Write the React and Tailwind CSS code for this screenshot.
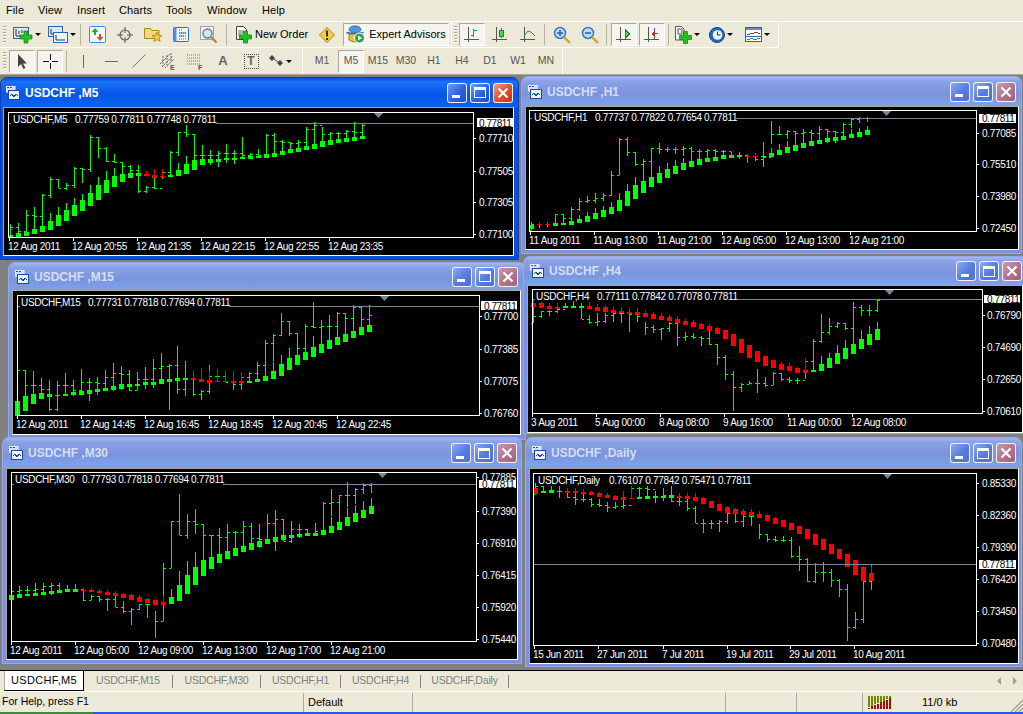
import React from 'react';

const FONT = '"Liberation Sans", Arial, sans-serif';

// bars are read off the reference at 3x, so every y below is in 3x units from the chart's origin
const chunk = (a, n) => {
  const out = [];
  for (let i = 0; i < a.length; i += n) out.push(a.slice(i, i + n));
  return out;
};

const inRanges = (i, ranges) => ranges.some(([a, b]) => i >= a && i <= b);

const CHARTS = {
  m5: {
    ox: 0, oy: 100, bx: 4, by: 108, w: 509, h: 147, plot: [25, 35, 1420, 411], start: 30, priceY: 70,
    head: ['USDCHF,M5', 38, '0.77759 0.77811 0.77748 0.77811', 225], lineFrom: 648, tri: 1135,
    box: [1430, 55, 1540, 81], axisX: 1437,
    yl: [['0.77710', 115], ['0.77505', 212], ['0.77305', 307], ['0.77100', 403]],
    xl: [[25, '12 Aug 2011'], [217, '12 Aug 20:55'], [409, '12 Aug 21:35'], [601, '12 Aug 22:15'], [793, '12 Aug 22:55'], [985, '12 Aug 23:35']],
    red: [[17, 19]],
    thin: [372,411,380, 370,400,392, 330,395,345, 322,390,348, 283,378,285, 230,293,238, 237,265,265, 250,270,256, 200,263,205, 205,250,208, 105,217,112, 110,173,143, 142,185,184, 162,188,187, 185,220,197, 195,218,210, 195,280,272, 258,280,262, 215,268,265, 208,236,215, 153,228,155, 97,168,97, 75,110,103, 102,172,165, 135,190,165, 150,195,165, 152,202,160, 132,190,158, 150,192,160, 112,178,165, 158,178,162, 147,172,165, 102,165,105, 100,160,122, 120,160,125, 127,155,130, 120,150,125, 82,145,88, 67,130,75, 80,125,103, 97,122,100, 97,118,100, 90,125,92, 67,115,95, 70,110,75],
    body: [405,405,411, 399,399,411, 396,396,408, 375,387,402, 365,378,395, 340,364,390, 322,345,378, 310,330,363, 295,316,348, 283,300,333, 255,280,318, 232,255,300, 213,240,279, 205,228,261, 198,222,246, 195,219,234, 200,219,228, 213,222,228, 208,225,234, 208,228,232, 210,225,231, 190,210,228, 168,192,222, 155,180,210, 158,177,195, 150,177,189, 152,177,186, 132,174,180, 150,174,180, 112,171,177, 158,168,177, 147,168,174, 150,163,174, 150,159,171, 140,153,165, 135,147,159, 130,144,156, 125,138,150, 120,132,147, 110,123,141, 105,120,135, 100,117,129, 100,114,126, 95,111,123, 90,108,117],
  },
  h1: {
    ox: 520, oy: 76, bx: 526, by: 107, w: 492, h: 142, plot: [28, 103, 1368, 465], start: 32, priceY: 127,
    head: ['USDCHF,H1', 42, '0.77737 0.77822 0.77654 0.77811', 225], lineFrom: 648, tri: 1097,
    box: [1378, 113, 1488, 140], axisX: 1386,
    yl: [['0.77085', 170], ['0.75510', 265], ['0.73980', 361], ['0.72450', 457]],
    xl: [[28, '11 Aug 2011'], [220, '11 Aug 13:00'], [412, '11 Aug 21:00'], [604, '12 Aug 05:00'], [796, '12 Aug 13:00'], [988, '12 Aug 21:00']],
    red: [[1, 2], [27, 28]],
    thin: [437,462,445, 437,455,445, 437,452,445, 413,445,414, 413,445,425, 392,440,398, 367,405,375, 360,382,372, 352,382,365, 350,375,358, 285,360,298, 187,298,190, 184,240,228, 228,270,265, 250,315,255, 215,295,217, 202,235,218, 213,228,218, 213,235,220, 210,240,216, 213,240,225, 218,240,224, 218,235,222, 220,240,224, 222,245,226, 228,245,236, 228,248,238, 235,262,240, 232,255,248, 198,272,242, 135,205,175, 150,178,175, 162,190,165, 165,215,170, 158,205,168, 163,205,170, 150,200,160, 158,200,165, 165,200,168, 142,180,145, 128,155,130, 124,142,126, 124,138,126],
    body: [440,448,460, 438,444,447, 440,444,447, 430,442,449, 430,441,446, 425,435,447, 418,429,440, 408,421,437, 397,411,429, 390,402,423, 378,393,414, 350,372,405, 325,345,390, 303,327,369, 282,315,351, 283,303,333, 270,291,321, 260,279,306, 252,270,294, 247,261,282, 240,255,273, 237,249,267, 232,245,258, 225,243,255, 225,238,249, 228,236,246, 228,238,243, 235,240,243, 230,240,243, 238,240,243, 215,231,243, 205,222,237, 195,213,231, 190,207,225, 185,201,216, 183,195,210, 178,191,204, 170,186,198, 165,183,195, 165,180,192, 160,174,186, 155,168,183, 150,162,177],
  },
  h4: {
    ox: 520, oy: 250, bx: 528, by: 286, w: 494, h: 146, plot: [35, 118, 1385, 490], start: 38, priceY: 148,
    head: ['USDCHF,H4', 48, '0.77111 0.77842 0.77078 0.77811', 230], lineFrom: 654, tri: 1108,
    box: [1392, 134, 1500, 160], axisX: 1401,
    yl: [['0.76790', 195], ['0.74690', 290], ['0.72650', 386], ['0.70610', 482]],
    xl: [[32, '3 Aug 2011'], [224, '5 Aug 00:00'], [416, '8 Aug 08:00'], [608, '9 Aug 16:00'], [800, '11 Aug 00:00'], [992, '12 Aug 08:00']],
    red: [[0, 3], [7, 34]],
    thin: [148,218,198, 182,205,184, 180,198,183, 172,188,178, 158,175,172, 152,175,170, 165,208,208, 195,222,215, 188,228,212, 190,218,195, 180,215,190, 180,218,190, 190,247,192, 190,217,198, 215,255,232, 225,248,237, 235,270,235, 215,245,218, 215,288,260, 245,272,258, 250,268,262, 258,288,265, 240,285,282, 282,345,322, 315,390,372, 362,483,412, 398,425,402, 393,403,398, 358,430,400, 380,412,405, 367,405,370, 370,393,387, 380,398,390, 385,402,390, 328,388,333, 268,365,272, 192,280,245, 205,255,228, 215,235,220, 220,240,235, 155,285,170, 165,198,180, 165,198,180, 148,185,150],
    body: [148,160,172, 155,160,174, 158,167,178, 160,171,177, 158,168,173, 155,168,173, 158,168,173, 155,168,178, 163,171,183, 165,172,186, 170,180,190, 172,183,190, 173,186,192, 173,186,195, 180,189,201, 185,192,207, 190,198,210, 195,201,213, 197,207,219, 208,213,225, 210,216,231, 218,222,237, 222,228,243, 230,234,252, 240,240,267, 252,252,288, 268,268,309, 285,285,324, 303,303,336, 318,318,348, 330,330,354, 336,342,360, 340,348,363, 350,354,369, 325,360,369, 340,360,366, 318,342,363, 310,324,354, 285,309,342, 270,294,327, 255,282,312, 240,267,297, 228,252,285, 217,237,270],
  },
  m15: {
    ox: 0, oy: 258, bx: 13, by: 291, w: 507, h: 143, plot: [50, 112, 1436, 472], start: 52, priceY: 145,
    head: ['USDCHF,M15', 62, '0.77731 0.77818 0.77694 0.77811', 263], lineFrom: 688, tri: 1153,
    box: [1444, 130, 1552, 156], axisX: 1451,
    yl: [['0.77700', 175], ['0.77385', 272], ['0.77075', 368], ['0.76760', 464]],
    xl: [[49, '12 Aug 2011'], [241, '12 Aug 14:45'], [433, '12 Aug 16:45'], [625, '12 Aug 18:45'], [817, '12 Aug 20:45'], [1009, '12 Aug 22:45']],
    red: [[22, 28]],
    thin: [262,470,335, 335,415,382, 340,400,382, 360,415,392, 365,458,452, 370,460,382, 345,415,382, 365,415,395, 333,410,372, 360,428,372, 357,410,375, 337,390,357, 315,398,345, 323,395,348, 335,398,396, 343,397,362, 327,392,362, 303,390,330, 285,370,325, 318,455,322, 263,408,393, 308,415,362, 335,415,408, 395,425,400, 322,408,355, 333,372,355, 335,372,372, 338,395,378, 343,395,358, 343,375,345, 312,360,322, 247,355,255, 228,310,232, 165,235,190, 190,235,225, 225,285,270, 198,270,205, 132,210,208, 185,250,203, 172,245,205, 163,240,165, 165,205,180, 142,205,148, 148,207,182, 142,200,170],
    body: [430,430,470, 414,414,458, 340,408,438, 360,405,423, 365,408,417, 370,410,414, 345,407,414, 365,403,412, 333,399,411, 360,396,408, 357,393,402, 337,390,399, 315,384,396, 323,378,393, 335,378,387, 343,378,385, 327,372,381, 303,372,381, 285,363,378, 318,363,372, 263,360,369, 308,360,366, 335,360,365, 330,363,372, 335,366,375, 333,369,372, 335,369,372, 338,369,375, 343,369,375, 345,369,375, 312,363,372, 325,354,369, 312,339,363, 290,318,354, 270,300,336, 250,291,321, 250,282,306, 235,267,297, 245,258,285, 225,246,273, 215,237,261, 205,228,252, 195,219,240, 180,207,231, 175,201,222],
  },
  m30: {
    ox: 0, oy: 436, bx: 7, by: 469, w: 510, h: 190, plot: [32, 109, 1428, 615], start: 34, priceY: 145,
    head: ['USDCHF,M30', 44, '0.77793 0.77818 0.77694 0.77811', 245], lineFrom: 670, tri: 1145,
    box: [1437, 131, 1548, 157], axisX: 1446,
    yl: [['0.77885', 123], ['0.77390', 225], ['0.76910', 320], ['0.76415', 416], ['0.75920', 512], ['0.75440', 608]],
    xl: [[31, '12 Aug 2011'], [223, '12 Aug 05:00'], [415, '12 Aug 09:00'], [607, '12 Aug 13:00'], [799, '12 Aug 17:00'], [991, '12 Aug 21:00']],
    red: [[9, 19]],
    thin: [427,490,465, 450,475,462, 450,478,462, 442,478,458, 442,475,450, 442,478,448, 442,470,462, 448,468,458, 445,468,458, 462,495,492, 478,493,480, 480,497,490, 487,525,490, 480,512,512, 495,530,525, 517,567,518, 505,522,505, 505,545,505, 525,605,555, 380,555,395, 255,397,255, 175,298,298, 235,310,255, 220,295,265, 265,345,298, 298,362,298, 275,348,302, 265,345,288, 285,345,288, 255,345,270, 260,342,305, 265,335,310, 235,320,262, 223,345,248, 250,315,315, 255,322,278, 265,305,280, 280,298,290, 260,295,285, 197,285,200, 160,240,197, 178,270,178, 138,212,178, 155,205,160, 142,175,148, 142,170,145],
    body: [455,477,492, 465,474,486, 465,474,480, 460,471,481, 455,468,478, 450,465,474, 455,462,472, 450,460,468, 450,460,468, 455,462,466, 455,462,468, 460,465,471, 462,468,477, 465,471,480, 470,474,486, 475,477,492, 478,483,498, 485,489,501, 490,492,507, 478,498,508, 460,483,504, 405,447,495, 375,417,474, 347,393,447, 333,372,420, 340,363,399, 330,354,381, 330,345,369, 320,336,360, 320,330,348, 320,321,342, 310,315,333, 305,309,324, 290,303,318, 290,297,312, 290,297,306, 290,293,303, 285,291,300, 280,291,299, 270,282,297, 243,270,291, 240,258,282, 215,243,270, 208,231,258, 195,222,246, 187,210,234],
  },
  daily: {
    ox: 520, oy: 436, bx: 530, by: 469, w: 488, h: 194, plot: [40, 110, 1368, 628], start: 44, priceY: 385,
    head: ['USDCHF,Daily', 54, '0.76107 0.77842 0.75471 0.77811', 267], lineFrom: 40, tri: 1100,
    box: [1378, 372, 1488, 398], axisX: 1386,
    yl: [['0.85330', 140], ['0.82360', 236], ['0.79390', 332], ['0.76420', 428], ['0.73450', 524], ['0.70480', 620]],
    xl: [[40, '15 Jun 2011'], [230, '27 Jun 2011'], [427, '7 Jul 2011'], [617, '19 Jul 2011'], [808, '29 Jul 2011'], [1000, '10 Aug 2011']],
    red: [[0, 0], [4, 12], [18, 42]],
    thin: [140,173,150, 150,170,168, 150,170,165, 150,185,165, 155,185,183, 165,207,190, 170,197,190, 185,212,205, 190,212,208, 198,228,212, 197,220,210, 165,218,207, 150,185,155, 155,190,157, 150,190,160, 165,200,180, 155,195,178, 150,198,195, 185,210,195, 190,225,215, 210,260,260, 250,290,262, 253,278,262, 253,287,255, 215,265,232, 235,260,255, 235,272,240, 240,270,240, 265,308,295, 293,317,310, 300,318,312, 300,318,312, 303,365,360, 330,405,368, 365,437,435, 380,440,408, 378,437,408, 400,453,432, 428,483,460, 445,615,572, 528,578,550, 435,560,435, 385,462,385],
    body: [155,155,173, 150,165,170, 150,162,172, 152,165,168, 155,165,170, 157,165,172, 160,168,175, 165,168,177, 168,171,183, 172,177,186, 177,180,192, 165,183,192, 150,186,189, 152,183,189, 152,180,189, 165,180,187, 155,180,187, 150,177,185, 170,180,186, 170,180,189, 172,183,195, 183,186,204, 195,195,216, 204,204,225, 210,213,231, 215,219,234, 220,225,237, 219,228,240, 225,234,246, 235,237,255, 243,246,264, 252,252,273, 261,261,282, 270,270,294, 279,279,309, 294,294,327, 309,309,342, 324,324,354, 339,339,369, 354,354,393, 372,372,417, 390,393,435, 390,411,435],
  },
};

function Chart({ c }) {
  const X = (z) => c.ox + Math.round(z / 3);
  const Y = (z) => c.oy + Math.round(z / 3);
  const [l, t, r, b] = [X(c.plot[0]), Y(c.plot[1]), X(c.plot[2]), Y(c.plot[3])];
  const py = Y(c.priceY);
  const thin = chunk(c.thin, 3);
  const body = chunk(c.body, 3);
  const label = { fill: '#fff', fontSize: 10, letterSpacing: -0.32, fontFamily: FONT, style: { textRendering: 'optimizeSpeed' } };
  return (
    <svg width={c.w} height={c.h} viewBox={`${c.bx} ${c.by} ${c.w} ${c.h}`} className="block bg-black" shapeRendering="crispEdges">
      {thin.map(([hi, lo, close], i) => {
        const x = X(c.start + i * 24);
        const open = i > 0 ? thin[i - 1][2] : lo;
        return (
          <g key={i} fill="#00ff00">
            <rect x={x} y={Y(hi)} width={1} height={Math.max(1, Y(lo) - Y(hi))} />
            <rect x={x - 2} y={Y(open)} width={2} height={1} />
            <rect x={x + 1} y={Y(close)} width={2} height={1} />
          </g>
        );
      })}
      {body.map(([wick, top, bot], i) => {
        const x = X(c.start + i * 24);
        const fill = inRanges(i, c.red) ? '#ff0000' : '#00ff00';
        return (
          <g key={i} fill={fill}>
            <rect x={x} y={Y(wick)} width={1} height={Math.max(1, Y(bot) - Y(wick))} />
            <rect x={x - 2} y={Y(top)} width={5} height={Math.max(1, Y(bot) - Y(top))} />
          </g>
        );
      })}
      <rect x={l} y={py} width={3} height={1} fill="#778899" />
      <rect x={X(c.lineFrom)} y={py} width={r - X(c.lineFrom)} height={1} fill="#778899" />
      <polygon points={`${X(c.tri) - 4},${t + 1} ${X(c.tri) + 5},${t + 1} ${X(c.tri) + 0.5},${t + 6}`} fill="#778899" shapeRendering="auto" />
      <rect x={l} y={t} width={r - l} height={b - t} fill="none" stroke="#fff" strokeWidth={1} />
      <text x={X(c.head[1])} y={t + 11} {...label}>{c.head[0]}</text>
      <text x={X(c.head[3])} y={t + 11} {...label}>{c.head[2]}</text>
      {c.yl.map(([txt, z]) => (
        <g key={txt}>
          <rect x={r} y={Y(z)} width={3} height={1} fill="#fff" />
          <text x={X(c.axisX)} y={Y(z) + 4} {...label}>{txt}</text>
        </g>
      ))}
      {c.xl.map(([z, txt]) => (
        <g key={txt}>
          <rect x={X(z + 3)} y={b} width={1} height={4} fill="#fff" />
          <text x={X(z)} y={b + 13} {...label}>{txt}</text>
        </g>
      ))}
      <rect x={X(c.box[0])} y={Y(c.box[1])} width={X(c.box[2]) - X(c.box[0])} height={Y(c.box[3]) - Y(c.box[1])} fill="#fff" />
      <text x={X(c.axisX)} y={py + 4} {...label} fill="#000" letterSpacing={-0.45}>0.77811</text>
    </svg>
  );
}

function CaptionButton({ kind, active }) {
  const tone = kind === 'close'
    ? active ? 'bg-[linear-gradient(135deg,#f0a08a,#e2512f_50%,#c8340f)]' : 'bg-[linear-gradient(135deg,#c99aa8,#b07088_60%,#a06078)]'
    : active ? 'bg-[linear-gradient(135deg,#6f9cf5,#2c62e0_55%,#1c4fd0)]' : 'bg-[linear-gradient(135deg,#8eaaf0,#557be0_55%,#4c70d8)]';
  return (
    <div className={`w-[20px] h-[20px] rounded-[3px] border border-white/90 flex items-center justify-center ${tone}`}>
      {kind === 'min' && <div className="w-[8px] h-[3px] bg-white mt-[8px] -ml-[3px]" />}
      {kind === 'max' && <div className="w-[12px] h-[11px] border border-white border-t-[3px]" />}
      {kind === 'close' && (
        <svg width="12" height="12" viewBox="0 0 12 12">
          <path d="M1.5 1.5l9 9M10.5 1.5l-9 9" stroke="#fff" strokeWidth="2.2" />
        </svg>
      )}
    </div>
  );
}

function ChartGlyph() {
  return (
    <svg width="14" height="14" viewBox="0 0 14 14" shapeRendering="crispEdges">
      <rect x="0" y="0" width="9" height="6" fill="#cfe0f8" stroke="#fff" strokeWidth="0.5" />
      <rect x="1" y="1" width="2" height="1" fill="#2a4f9a" />
      <rect x="4" y="1" width="2" height="1" fill="#2a4f9a" />
      <rect x="2.5" y="4.5" width="11" height="9" fill="#eaf1fb" stroke="#1f4a9a" />
      <path d="M4 10l2-2 2 3 2-3 2 2" fill="none" stroke="#1f4a9a" />
    </svg>
  );
}

function ChartWindow({ c, title, active, box, pad, titleBar, right }) {
  return (
    <div className={`absolute flex flex-col rounded-t-[7px] border ${box} ${pad} ${active
      ? 'border-[#0a3cc0] bg-[linear-gradient(180deg,#0a50d8_0,#1a72f8_4px,#0556e6_16px,#0a62f2_28px,#0c4fd8_31px)]'
      : 'border-[#98a8e4] bg-[linear-gradient(180deg,#a2b6ee_0,#8aa2e6_4px,#7a94de_16px,#7ea2ea_28px,#7c92e0_31px)]'}`}>
      <div className={`flex items-center shrink-0 ${titleBar} ${right}`}>
        <div className="ml-[3px]"><ChartGlyph /></div>
        <span className={`ml-[5px] text-[12px] font-bold whitespace-pre ${active ? 'text-white' : 'text-[#d4def8]'}`}>{title}</span>
        <div className="ml-auto flex gap-[3px]">
          <CaptionButton kind="min" active={active} />
          <CaptionButton kind="max" active={active} />
          <CaptionButton kind="close" active={active} />
        </div>
      </div>
      <div className="self-start border border-t-[#aca899] border-l-[#aca899] border-r-white border-b-white">
        <Chart c={c} />
      </div>
    </div>
  );
}

/* ---- toolbar pieces ---- */

const Arrow = () => <div className="w-0 h-0 border-x-[3px] border-x-transparent border-t-[3px] border-t-black ml-[2px]" />;
const Grip = ({ className = '' }) => (
  <div className={`w-[3px] h-[18px] bg-[repeating-linear-gradient(180deg,#a8a593_0,#a8a593_1px,#ffffff_1px,#ffffff_2px,transparent_2px,transparent_3px)] ${className}`} />
);
const Sep = ({ className = '' }) => <div className={`w-px h-[21px] bg-[#b5b29f] ${className}`} />;

function Btn({ w, pressed, children, className = '' }) {
  return (
    <div className={`h-[23px] flex items-center justify-center shrink-0 ${w} ${className} ${pressed
      ? 'border border-t-[#aca899] border-l-[#aca899] border-r-white border-b-white bg-[#f5f4ee]'
      : ''}`}>
      {children}
    </div>
  );
}

const PLUS = 'M4 0h4v4h4v4H8v4H4V8H0V4h4z';
const Plus = ({ x, y }) => <path d={PLUS} transform={`translate(${x} ${y})`} fill="#22c022" stroke="#0c7c0c" strokeWidth="0.7" />;

const NewChartIcon = () => (
  <svg width="20" height="18" viewBox="0 0 20 18">
    <rect x="0.5" y="1.5" width="15" height="11" fill="#dce8f8" stroke="#2f64b0" />
    <path d="M3 3v7h10M6 5v3M9 4v3" stroke="#333" fill="none" />
    <Plus x={7} y={5} />
  </svg>
);
const ProfileIcon = () => (
  <svg width="20" height="18" viewBox="0 0 20 18">
    <rect x="0.5" y="0.5" width="14" height="10" fill="#dce8f8" stroke="#2f64b0" />
    <path d="M3 3v5h9" stroke="#333" fill="none" />
    <rect x="5.5" y="6.5" width="14" height="10" fill="#eef3fb" stroke="#2f64b0" />
    <path d="M8 9v5h9" stroke="#333" fill="none" />
  </svg>
);
const MarketIcon = () => (
  <svg width="17" height="17" viewBox="0 0 17 17">
    <rect x="0.5" y="0.5" width="16" height="16" rx="1" fill="#f2f6fd" stroke="#4a86d8" />
    <path d="M6 2l3.500 4H7v3H5V6H2.500z" fill="#22b022" />
    <path d="M11 15l-3.500-4H10V8h2v3h2.500z" fill="#e04a20" />
  </svg>
);
const CrossIcon = () => (
  <svg width="16" height="16" viewBox="0 0 16 16">
    <circle cx="8" cy="8" r="5" fill="none" stroke="#666" strokeWidth="1.2" />
    <path d="M8 0v6M8 10v6M0 8h6M10 8h6" stroke="#555" />
  </svg>
);
const FolderStarIcon = () => (
  <svg width="19" height="17" viewBox="0 0 19 17">
    <path d="M0.500 2.500h6l1.500 2h7v8h-14.500z" fill="#f5d878" stroke="#a88820" />
    <path d="M13 6l1.500 3.300 3.500 0.300-2.700 2.300 0.900 3.600-3.200-1.900-3.200 1.900 0.900-3.600-2.700-2.300 3.500-0.300z" fill="#f2c83c" stroke="#a07c10" strokeWidth="0.7" />
  </svg>
);
const TerminalIcon = () => (
  <svg width="16" height="15" viewBox="0 0 16 15">
    <rect x="0.5" y="0.5" width="15" height="14" rx="1" fill="#f4f7fd" stroke="#2a6ad0" />
    <rect x="0.5" y="0.5" width="3" height="14" fill="#4a90e8" />
    <path d="M6 3h3M6 6h7M6 9h7M6 12h7" stroke="#c03020" strokeDasharray="1 1" />
    <path d="M6 6h7M6 9h5" stroke="#5577aa" />
  </svg>
);
const TesterIcon = () => (
  <svg width="18" height="18" viewBox="0 0 18 18">
    <rect x="0.5" y="0.5" width="13" height="13" fill="#f2f2f2" stroke="#a0a0a0" />
    <circle cx="7.500" cy="7.500" r="4.500" fill="#cfe4f6" stroke="#707890" strokeWidth="1.400" />
    <path d="M11 11l5.500 5.500" stroke="#b08a20" strokeWidth="2.200" />
  </svg>
);
const OrderIcon = () => (
  <svg width="17" height="18" viewBox="0 0 17 18">
    <path d="M1.500 0.500h7l3 3v10h-10z" fill="#fff" stroke="#444" />
    <path d="M3 5h5M3 7h5M3 9h3" stroke="#666" />
    <Plus x={4.500} y={5} />
  </svg>
);
const WarnIcon = () => (
  <svg width="16" height="16" viewBox="0 0 16 16">
    <path d="M8 0.500l7.500 7.500-7.500 7.500-7.500-7.500z" fill="#f4cc40" stroke="#a8861c" />
    <rect x="7" y="3.500" width="2" height="6" fill="#333" />
    <rect x="7" y="11" width="2" height="2" fill="#333" />
  </svg>
);
const EaIcon = () => (
  <svg width="20" height="19" viewBox="0 0 20 19">
    <ellipse cx="9" cy="4.500" rx="6" ry="3.500" fill="#4a9ad8" stroke="#2a6ea8" />
    <path d="M0.500 7.500c4 1.500 12 1.500 17 0" fill="none" stroke="#2a6ea8" strokeWidth="1.500" />
    <path d="M3 9h12v6c-2 2.500-9 2.500-12 0z" fill="#e6c24a" stroke="#9a7c20" />
    <circle cx="13.500" cy="13" r="5" fill="#22a84a" stroke="#fff" />
    <path d="M12 10.500l4 2.500-4 2.500z" fill="#fff" />
  </svg>
);
const Axes = ({ children }) => (
  <svg width="16" height="16" viewBox="0 0 16 16" shapeRendering="crispEdges">
    <path d="M4.500 0v15M0 12.500h15" stroke="#555" />
    {children}
  </svg>
);
const BarIcon = () => <Axes><path d="M9.500 2v8M9.500 3h3M7 8h2.500" stroke="#22a022" fill="none" /></Axes>;
const CandleIcon = () => <Axes><path d="M9.500 1v10" stroke="#0a8a0a" /><rect x="7.500" y="3.500" width="4" height="6" fill="#44dd44" stroke="#1a8a1a" /></Axes>;
const LineIcon = () => <Axes><path d="M4 9l4-5 3 1 4 4" stroke="#1a9a1a" fill="none" shapeRendering="auto" /></Axes>;
const ZoomIcon = ({ plus }) => (
  <svg width="18" height="18" viewBox="0 0 18 18">
    <circle cx="7" cy="7" r="5.500" fill="#bcd8f4" stroke="#3a78c0" strokeWidth="1.500" />
    <path d="M4 7h6" stroke="#2a68b8" strokeWidth="1.600" />
    {plus && <path d="M7 4v6" stroke="#2a68b8" strokeWidth="1.600" />}
    <path d="M11 11l6 6" stroke="#c8a830" strokeWidth="2.400" />
  </svg>
);
const ScrollIcon = () => <Axes><path d="M9.500 3l4 4-4 4z" fill="#66dd66" stroke="#1a8a1a" /></Axes>;
const ShiftIcon = () => <Axes><path d="M10.500 1v11" stroke="#2a50c0" /><path d="M14 6.500h-3M10 5.500l-2 1.500 2 1.500z" fill="#d03010" stroke="#d03010" /></Axes>;
const TemplateIcon = () => (
  <svg width="17" height="18" viewBox="0 0 17 18">
    <path d="M0.500 0.500h6l2.500 2.500v11h-8.500z" fill="#fff" stroke="#555" />
    <rect x="3" y="3" width="4" height="5" fill="#eee" stroke="#555" />
    <Plus x={4.500} y={5.500} />
  </svg>
);
const ClockIcon = () => (
  <svg width="16" height="16" viewBox="0 0 16 16">
    <circle cx="8" cy="8" r="7.500" fill="#1f6ac8" stroke="#0f3e88" />
    <circle cx="8.500" cy="8" r="4.800" fill="#f0f2f6" />
    <path d="M8.500 4.500V8h3" stroke="#333" fill="none" />
  </svg>
);
const IndicatorsIcon = () => (
  <svg width="17" height="15" viewBox="0 0 17 15" shapeRendering="crispEdges">
    <rect x="0.500" y="0.500" width="16" height="14" fill="#fff" stroke="#2a62b0" />
    <rect x="1" y="1" width="15" height="2" fill="#5a92d8" />
    <path d="M2 7h3M5 6h4M9 5h4M13 6h2" stroke="#b03020" />
    <path d="M1 9h15" stroke="#2a62b0" />
    <path d="M2 12h3M5 11h3M8 12h4M12 11h3" stroke="#2a9a3a" />
  </svg>
);
const CursorIcon = () => (
  <svg width="11" height="15" viewBox="0 0 11 15">
    <path d="M1 0v13l3-3 2.500 5 2-1-2.500-4.500h4z" fill="#444" />
  </svg>
);
const CrosshairIcon = () => (
  <svg width="15" height="15" viewBox="0 0 15 15" shapeRendering="crispEdges">
    <path d="M7.500 0v6M7.500 9v6M0 7.500h6M9 7.500h6" stroke="#111" />
  </svg>
);
const VLine = () => <div className="w-px h-[13px] bg-[#666]" />;
const HLine = () => <div className="w-[13px] h-px bg-[#666]" />;
const DiagLine = () => (
  <svg width="14" height="14" viewBox="0 0 14 14"><path d="M0.500 13.500l13-13" stroke="#777" /></svg>
);
const ChannelIcon = () => (
  <svg width="17" height="17" viewBox="0 0 17 17">
    <path d="M1 11L11 1M3 14L14 3M6 15L15 6M4 3v10M8 2v10M12 0v9" stroke="#666" fill="none" strokeDasharray="2 1" />
    <text x="11" y="17" fontSize="7" fontWeight="700" fill="#555" fontFamily={FONT}>E</text>
  </svg>
);
const FiboIcon = () => (
  <svg width="17" height="17" viewBox="0 0 17 17">
    <path d="M0 2h14M0 5h14M0 8h14M0 11h14" stroke="#777" strokeDasharray="1 1" />
    <text x="11" y="17" fontSize="7" fontWeight="700" fill="#555" fontFamily={FONT}>F</text>
  </svg>
);
const ArrowsIcon = () => (
  <svg width="15" height="13" viewBox="0 0 15 13">
    <path d="M0 3l3-3 3 3-3 3zM8 8l3-3 3 3-3 3z" fill="#444" />
    <path d="M5 4l4 3" stroke="#444" />
  </svg>
);

function MenuBar() {
  const items = [['File', 'w-[32px]'], ['View', 'w-[39px]'], ['Insert', 'w-[42px]'], ['Charts', 'w-[47px]'], ['Tools', 'w-[41px]'], ['Window', 'w-[55px]'], ['Help', 'w-[30px]']];
  return (
    <div className="h-[22px] flex items-center pl-[6px] border-b border-white text-[11px] tracking-[0.1px] text-black shrink-0">
      {items.map(([label, w]) => <span key={label} className={`${w} shrink-0`}>{label}</span>)}
    </div>
  );
}

function ToolbarTop() {
  return (
    <div className="flex h-[26px] shrink-0">
      <div className="w-[452px] flex items-center border-r border-b border-white rounded-br-[2px] pl-[3px]">
        <Grip />
        <Btn w="w-[31px]" className="ml-[5px]"><NewChartIcon /><Arrow /></Btn>
        <Btn w="w-[31px]" className="ml-[4px]"><ProfileIcon /><Arrow /></Btn>
        <Sep className="ml-[3px]" />
        <Btn w="w-[28px]" className="ml-[2px]"><MarketIcon /></Btn>
        <Btn w="w-[28px]"><CrossIcon /></Btn>
        <Btn w="w-[28px]"><FolderStarIcon /></Btn>
        <Btn w="w-[28px]"><TerminalIcon /></Btn>
        <Btn w="w-[28px]"><TesterIcon /></Btn>
        <Sep className="ml-[3px]" />
        <Btn w="w-[75px]" className="ml-[8px] justify-start"><OrderIcon /><span className="ml-[3px] text-[11px]">New Order</span></Btn>
        <Btn w="w-[24px]" className="ml-[5px]"><WarnIcon /></Btn>
        <Btn w="w-[106px]" pressed className="ml-[4px]"><EaIcon /><span className="ml-[3px] text-[11px]">Expert Advisors</span></Btn>
      </div>
      <div className="w-[327px] flex items-center border-r border-b border-white rounded-br-[2px] pl-[2px]">
        <Grip />
        <Btn w="w-[26px]" pressed className="ml-[2px]"><BarIcon /></Btn>
        <Btn w="w-[28px]" className="ml-[1px]"><CandleIcon /></Btn>
        <Btn w="w-[28px]"><LineIcon /></Btn>
        <Sep className="ml-[2px]" />
        <Btn w="w-[28px]" className="ml-[3px]"><ZoomIcon plus /></Btn>
        <Btn w="w-[28px]"><ZoomIcon /></Btn>
        <Sep className="ml-[2px]" />
        <Btn w="w-[26px]" pressed className="ml-[4px]"><ScrollIcon /></Btn>
        <Btn w="w-[26px]" pressed className="ml-[2px]"><ShiftIcon /></Btn>
        <Sep className="ml-[3px]" />
        <Btn w="w-[30px]" className="ml-[3px]"><TemplateIcon /><Arrow /></Btn>
        <Btn w="w-[30px]" className="ml-[4px]"><ClockIcon /><Arrow /></Btn>
        <Btn w="w-[33px]" className="ml-[5px]"><IndicatorsIcon /><Arrow /></Btn>
      </div>
    </div>
  );
}

function ToolbarBottom() {
  const frames = ['M1', 'M5', 'M15', 'M30', 'H1', 'H4', 'D1', 'W1', 'MN'];
  return (
    <div className="flex h-[27px] shrink-0 border-b border-[#aca899]">
      <div className="w-[303px] flex items-center border-r border-white pl-[3px]">
        <Grip />
        <Btn w="w-[26px]" pressed className="ml-[3px]"><CursorIcon /></Btn>
        <Btn w="w-[26px]" pressed className="ml-[2px]"><CrosshairIcon /></Btn>
        <Sep className="ml-[3px]" />
        <Btn w="w-[28px]" className="ml-[2px]"><VLine /></Btn>
        <Btn w="w-[28px]"><HLine /></Btn>
        <Btn w="w-[28px]"><DiagLine /></Btn>
        <Btn w="w-[28px]"><ChannelIcon /></Btn>
        <Btn w="w-[28px]"><FiboIcon /></Btn>
        <Btn w="w-[28px]"><span className="text-[13px] font-bold text-[#666]">A</span></Btn>
        <Btn w="w-[28px]">
          <span className="w-[15px] h-[15px] border border-dotted border-[#444] flex items-center justify-center text-[12px] font-bold text-[#666] leading-none">T</span>
        </Btn>
        <Btn w="w-[30px]"><ArrowsIcon /><Arrow /></Btn>
      </div>
      <div className="w-[260px] flex items-center border-r border-white pl-[5px]">
        {frames.map((f) => (
          <Btn key={f} w={f === 'M5' ? 'w-[26px]' : 'w-[28px]'} pressed={f === 'M5'} className={f === 'M5' ? 'ml-[2px]' : ''}>
            <span className="text-[10.500px] text-[#555]">{f}</span>
          </Btn>
        ))}
      </div>
    </div>
  );
}

function TabBar() {
  const tabs = [['USDCHF,M15', 'w-[89px]'], ['USDCHF,M30', 'w-[88px]'], ['USDCHF,H1', 'w-[80px]'], ['USDCHF,H4', 'w-[80px]'], ['USDCHF,Daily', 'w-[88px]']];
  return (
    <div className="h-[21px] flex items-center border-t border-black shrink-0 text-[11px]">
      <div className="ml-[4px] w-[80px] h-[20px] flex items-center justify-center bg-white border-r border-b border-black border-l border-l-[#aca899] text-black tracking-[0.35px]">USDCHF,M5</div>
      {tabs.map(([label, w]) => (
        <div key={label} className={`${w} h-[13px] flex items-center justify-center border-r border-[#808080] text-[#808080] text-[10.500px] tracking-[-0.2px]`}>{label}</div>
      ))}
      <div className="ml-auto flex items-center gap-[12px] pr-[6px]">
        <div className="w-0 h-0 border-y-[4px] border-y-transparent border-r-[4px] border-r-[#a0a090]" />
        <div className="w-0 h-0 border-y-[4px] border-y-transparent border-l-[4px] border-l-[#a0a090]" />
      </div>
    </div>
  );
}

const ConnBars = () => (
  <svg width="24" height="13" viewBox="0 0 24 13" shapeRendering="crispEdges">
    {[0, 1, 2, 3, 4, 5, 6, 7].map((i) => (
      <g key={i}>
        <rect x={i * 3} y={0} width={2} height={11 - i * 1.3} fill="#6f8a00" />
        <rect x={i * 3} y={11.5 - i * 1.3} width={2} height={1.5 + i * 1.3} fill="#a01400" />
      </g>
    ))}
  </svg>
);

function StatusBar() {
  const cell = 'h-[19px] flex items-center border-r border-[#aca899] shrink-0';
  return (
    <div className="relative h-[21px] flex items-center border-t border-white shrink-0 text-[11px] text-black">
      <div className={`${cell} w-[304px] pl-[2px] text-[10.500px]`}>For Help, press F1</div>
      <div className={`${cell} w-[109px] pl-[4px]`}>Default</div>
      <div className={`${cell} w-[313px]`} />
      <div className={`${cell} w-[71px]`} />
      <div className={`${cell} w-[66px]`} />
      <div className="ml-[5px]"><ConnBars /></div>
      <div className="ml-[30px]">11/0 kb</div>
      <svg className="absolute right-0 bottom-0" width="13" height="13" viewBox="0 0 13 13">
        <path d="M13 1L1 13M13 5L5 13M13 9L9 13" stroke="#aca899" strokeWidth="1.500" />
      </svg>
    </div>
  );
}

export default function App() {
  return (
    <div className="w-[1023px] h-[714px] flex flex-col overflow-hidden bg-[#ece9d8]" style={{ fontFamily: FONT }}>
      <MenuBar />
      <ToolbarTop />
      <ToolbarBottom />
      <div className="relative flex-1 overflow-hidden bg-[#808080]">
        <ChartWindow c={CHARTS.m15} title="USDCHF ,M15" box="left-[8px] top-[187px] w-[518px] h-[178px]" pad="pl-[3px]" titleBar="h-[27px]" right="w-[509px] pr-[3px]" />
        <ChartWindow c={CHARTS.h1} title="USDCHF ,H1" box="left-[521px] top-[1px] w-[501px] h-[178px]" pad="pl-[3px]" titleBar="h-[29px]" right="w-[494px] pr-[3px]" />
        <ChartWindow c={CHARTS.h4} title="USDCHF ,H4" box="left-[523px] top-[181px] w-[505px] h-[178px]" pad="pl-[3px]" titleBar="h-[28px]" right="w-[496px] pr-[1px]" />
        <ChartWindow c={CHARTS.m30} title="USDCHF ,M30" box="left-[2px] top-[362px] w-[520px] h-[227px]" pad="pl-[3px]" titleBar="h-[30px]" right="w-[512px] pr-[1px]" />
        <ChartWindow c={CHARTS.daily} title="USDCHF ,Daily" box="left-[525px] top-[362px] w-[497px] h-[230px]" pad="pl-[3px]" titleBar="h-[30px]" right="w-[490px] pr-[3px]" />
        <ChartWindow c={CHARTS.m5} title="USDCHF ,M5" active box="left-0 top-[2px] w-[519px] h-[183px]" pad="pl-[2px]" titleBar="h-[29px]" right="w-[511px] pr-[1px]" />
      </div>
      <TabBar />
      <StatusBar />
      <div className="h-[2px] flex shrink-0">
        <div className="w-[93px] bg-[#3c8a3c]" />
        <div className="flex-1 bg-[#245edb]" />
      </div>
    </div>
  );
}
